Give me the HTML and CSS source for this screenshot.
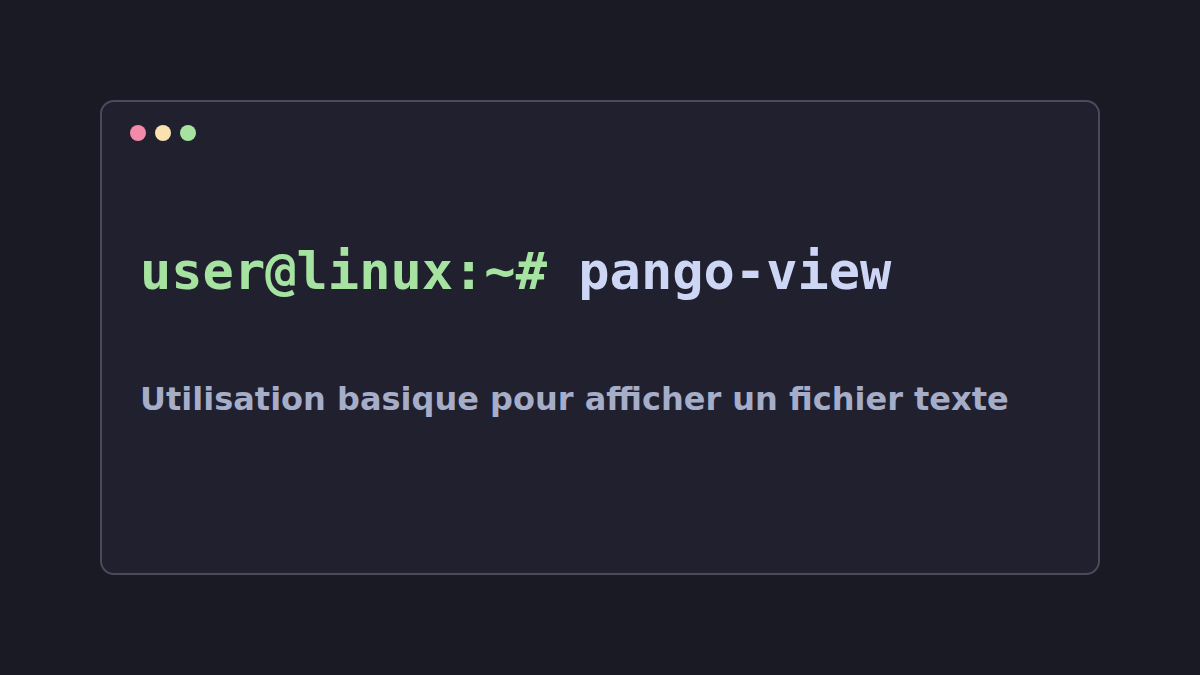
FILE: index.html
```html
<!DOCTYPE html>
<html lang="fr">
<head>
<meta charset="utf-8">
<link rel="stylesheet" href="styles.css">
</head>
<body>
<div class="card">
  <div class="dots">
    <span class="dot red"></span>
    <span class="dot yellow"></span>
    <span class="dot green"></span>
  </div>
  <div class="cmd"><span class="prompt">user@linux:~#</span> <span class="name">pango-view</span></div>
  <div class="desc">Utilisation basique pour afficher un fichier texte</div>
</div>
</body>
</html>
```
FILE: styles.css
```css
html, body {
  margin: 0;
  padding: 0;
}
body {
  width: 1200px;
  height: 675px;
  background: #1a1a24;
  padding: 100px;
  box-sizing: border-box;
}
.card {
  box-sizing: border-box;
  width: 1000px;
  height: 475px;
  background: #20202f;
  border: 2px solid #4a4a5c;
  border-radius: 14px;
  padding: 23px 28px 0 38px;
}
.dots {
  display: flex;
  gap: 9px;
  margin-left: -10px;
}
.dot {
  width: 16px;
  height: 16px;
  border-radius: 50%;
}
.red { background: #f38ba8; }
.yellow { background: #f9e2af; }
.green { background: #a6e3a1; }
.cmd {
  margin-top: 100px;
  font-family: "DejaVu Sans Mono", monospace;
  font-weight: bold;
  font-size: 52px;
  line-height: 60px;
  white-space: pre;
}
.prompt { color: #a6e3a1; }
.name { color: #cdd6f4; }
.desc {
  margin-top: 80px;
  font-family: "DejaVu Sans", sans-serif;
  font-weight: bold;
  font-size: 32px;
  line-height: 36px;
  color: #a6adc8;
}
```
